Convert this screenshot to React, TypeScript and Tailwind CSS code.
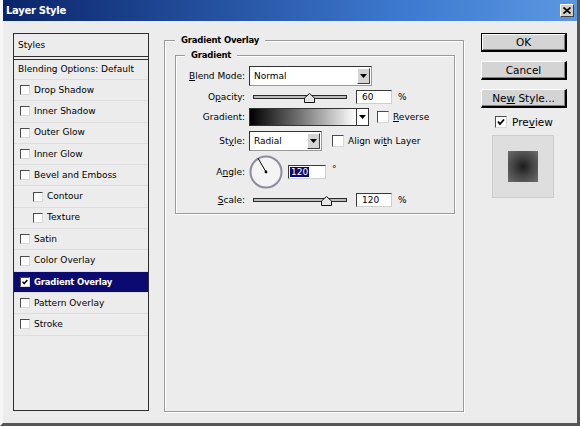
import React from "react";

type Item = { name: string; indent?: boolean; active?: boolean };

const effects: Item[] = [
  { name: "Drop Shadow" },
  { name: "Inner Shadow" },
  { name: "Outer Glow" },
  { name: "Inner Glow" },
  { name: "Bevel and Emboss" },
  { name: "Contour", indent: true },
  { name: "Texture", indent: true },
  { name: "Satin" },
  { name: "Color Overlay" },
  { name: "Gradient Overlay", active: true },
  { name: "Pattern Overlay" },
  { name: "Stroke" },
];

function CheckBox({ checked = false, big = false }: { checked?: boolean; big?: boolean }) {
  return (
    <span
      className={`${big ? "w-[12px] h-[12px]" : "w-[10px] h-[10px]"} shrink-0 flex items-center justify-center bg-white border border-t-[#4a4a4a] border-l-[#4a4a4a] border-r-[#d8d8d8] border-b-[#d8d8d8]`}
    >
      {checked && (
        <svg viewBox="0 0 10 10" className="w-full h-full">
          <polyline points="2,4.5 4,7 8,2.5" fill="none" stroke="#000" strokeWidth="1.8" />
        </svg>
      )}
    </span>
  );
}

function Arrow() {
  return (
    <svg width="7" height="4" viewBox="0 0 7 4">
      <polygon points="0,0 7,0 3.5,4" fill="#000" />
    </svg>
  );
}

function DropButton() {
  return (
    <span className="w-[13px] h-full shrink-0 flex items-center justify-center bg-[#d4d4d4] border border-t-white border-l-white border-r-[#404040] border-b-[#404040]">
      <Arrow />
    </span>
  );
}

function Slider({ pos }: { pos: number }) {
  return (
    <div className="relative ml-[4px] w-[94px] h-[14px] flex items-center">
      <div className="w-full h-[4px] bg-[#bdbdbd] border border-[#2a2a2a]" />
      <svg
        width="11"
        height="10"
        viewBox="0 0 11 10"
        className="absolute top-[3px]"
        style={{ left: pos - 5 }}
      >
        <polygon points="5.5,0.5 10.5,5 10.5,9.5 0.5,9.5 0.5,5" fill="#e6e6e6" stroke="#111" />
      </svg>
    </div>
  );
}

function Field({ children, w }: { children: React.ReactNode; w: string }) {
  return (
    <span
      className={`${w} h-[14px] flex items-center pl-[5px] bg-white border border-t-[#3a3a3a] border-l-[#3a3a3a] border-r-[#cfcfcf] border-b-[#cfcfcf]`}
    >
      {children}
    </span>
  );
}

function Row({ label, children, className }: { label: React.ReactNode; children: React.ReactNode; className: string }) {
  return (
    <div className={`flex items-center ${className}`}>
      <span className="w-[69px] text-right">{label}</span>
      <div className="ml-[4px] flex items-center h-full">{children}</div>
    </div>
  );
}

function Button({ children, primary = false }: { children: React.ReactNode; primary?: boolean }) {
  return (
    <div
      className={
        primary
          ? "h-[19px] flex items-center justify-center bg-[#d4d4d4] border border-black border-r-2 border-b-2 shadow-[inset_1px_1px_0_#fff,inset_-1px_-1px_0_#808080]"
          : "h-[19px] flex items-center justify-center bg-[#d4d4d4] border border-t-white border-l-white border-r-black border-b-black border-r-2 border-b-2 shadow-[inset_-1px_-1px_0_#808080]"
      }
    >
      {children}
    </div>
  );
}

function Dial() {
  return (
    <svg width="34" height="34" viewBox="0 0 34 34">
      <circle cx="17" cy="17" r="15.5" fill="#f4f4f4" stroke="#8c8c9c" strokeWidth="2" />
      <line x1="17" y1="17" x2="9" y2="3.2" stroke="#000" strokeWidth="1" />
      <circle cx="17" cy="17" r="1.4" fill="#000" />
    </svg>
  );
}

export default function App() {
  return (
    <div className="w-[580px] h-[426px] bg-[#ececec] font-['DejaVu_Sans',sans-serif] text-[9px] leading-none text-black border-l-[3px] border-l-[#f6f6f6] border-r-[3px] border-r-[#555] border-b-[3px] border-b-[#555] flex flex-col overflow-hidden">
      {/* title bar */}
      <div className="h-[21px] shrink-0 flex items-center justify-between pl-[3px] pr-[3px] bg-[linear-gradient(90deg,#0a246a,#3d7ad0_70%,#5c97e0)]">
        <span className="text-white font-bold text-[10px] tracking-[-0.3px]">Layer Style</span>
        <span className="w-[14px] h-[13px] flex items-center justify-center bg-[#d4d0c8] border border-t-white border-l-white border-r-[#404040] border-b-[#404040]">
          <svg width="8" height="7" viewBox="0 0 8 7">
            <path d="M0.5 0.5 L7.5 6.5 M7.5 0.5 L0.5 6.5" stroke="#000" strokeWidth="1.7" />
          </svg>
        </span>
      </div>

      <div className="flex items-start pt-[12px] pl-[10px]">
        {/* effect list */}
        <div className="w-[136px] h-[378px] border border-[#2e2e2e] flex flex-col">
          <div className="h-[23px] flex items-center pl-[4px] border-b border-[#2e2e2e]">Styles</div>
          <div className="mt-[2px] h-[21px] flex items-center pl-[4px] border-t border-b border-t-[#2e2e2e] border-b-[#dedede]">
            Blending Options: Default
          </div>
          {effects.map((e) => (
            <div
              key={e.name}
              className={`h-[21.3px] flex items-center gap-[4px] border-b border-[#dedede] ${e.indent ? "pl-[19px]" : "pl-[6px]"} ${e.active ? "bg-[#0a0a70] text-white font-bold text-[8.5px] tracking-[-0.2px]" : ""}`}
            >
              <CheckBox checked={e.active} />
              <span>{e.name}</span>
            </div>
          ))}
        </div>

        {/* settings */}
        <fieldset className="ml-[15px] mt-[1px] w-[300px] h-[378px] pt-[3px] pl-[10px] pr-[8px] border border-[#9a9a9a] shadow-[inset_1px_1px_0_#fff,1px_1px_0_#fff]">
          <legend className="ml-0 px-[6px] leading-[12px] font-bold text-[8.5px] tracking-[-0.2px] bg-[#ececec]">
            Gradient Overlay
          </legend>
          <fieldset className="w-[280px] pt-[5px] pb-[6px] border border-[#9a9a9a] shadow-[inset_1px_1px_0_#fff,1px_1px_0_#fff]">
            <legend className="ml-[9px] px-[6px] leading-[12px] font-bold text-[8.5px] tracking-[-0.2px] bg-[#ececec]">
              Gradient
            </legend>

            <Row className="h-[20px]" label={<><span className="underline">B</span>lend Mode:</>}>
              <div className="w-[123px] h-[20px] flex bg-white border border-t-[#333] border-l-[#333] border-r-[#9a9a9a] border-b-[#9a9a9a] p-[1px]">
                <span className="flex-1 flex items-center pl-[3px]">Normal</span>
                <DropButton />
              </div>
            </Row>

            <Row className="mt-[3px] h-[16px]" label={<>O<span className="underline">p</span>acity:</>}>
              <Slider pos={56} />
              <span className="ml-[9px]">
                <Field w="w-[36px]">60</Field>
              </span>
              <span className="ml-[6px]">%</span>
            </Row>

            <Row className="mt-[3px] h-[18px]" label="Gradient:">
              <div className="w-[120px] h-[18px] flex border border-[#333]">
                <span className="flex-1 bg-[linear-gradient(90deg,#000,#6e6e6e_45%,#fff)]" />
                <span className="w-[12px] flex items-center justify-center bg-white border-l border-[#333]">
                  <Arrow />
                </span>
              </div>
              <span className="ml-[8px]">
                <CheckBox big />
              </span>
              <span className="ml-[4px]">
                <span className="underline">R</span>everse
              </span>
            </Row>

            <Row className="mt-[5px] h-[20px]" label={<>St<span className="underline">y</span>le:</>}>
              <div className="w-[73px] h-[20px] flex bg-white border border-t-[#333] border-l-[#333] border-r-[#9a9a9a] border-b-[#9a9a9a] p-[1px]">
                <span className="flex-1 flex items-center pl-[3px]">Radial</span>
                <DropButton />
              </div>
              <span className="ml-[10px]">
                <CheckBox big />
              </span>
              <span className="ml-[4px]">
                Align wi<span className="underline">t</span>h Layer
              </span>
            </Row>

            <Row className="mt-[4px] h-[34px]" label={<>A<span className="underline">n</span>gle:</>}>
              <Dial />
              <span className="ml-[5px]">
                <span className="w-[38px] h-[14px] flex items-center pl-[1px] bg-white border border-t-[#3a3a3a] border-l-[#3a3a3a] border-r-[#cfcfcf] border-b-[#cfcfcf]">
                  <span className="bg-[#0a0a70] text-white px-[1px] h-[10px] flex items-center">120</span>
                </span>
              </span>
              <span className="ml-[6px] -mt-[6px]">°</span>
            </Row>

            <Row className="mt-[4px] h-[14px]" label={<><span className="underline">S</span>cale:</>}>
              <Slider pos={73} />
              <span className="ml-[9px]">
                <Field w="w-[36px]">120</Field>
              </span>
              <span className="ml-[6px]">%</span>
            </Row>
          </fieldset>
        </fieldset>

        {/* buttons and preview */}
        <div className="ml-[17px] w-[86px] flex flex-col text-[10.5px]">
          <Button primary>OK</Button>
          <div className="mt-[9px]">
            <Button>Cancel</Button>
          </div>
          <div className="mt-[9px]">
            <Button>
              Ne<span className="underline">w</span>&nbsp;Style...
            </Button>
          </div>
          <div className="mt-[8px] pl-[14px] h-[12px] flex items-center">
            <CheckBox big checked />
            <span className="ml-[5px]">
              Pre<span className="underline">v</span>iew
            </span>
          </div>
          <div className="mt-[7px] ml-[11px] w-[62px] h-[63px] flex items-center justify-center bg-[#dedede] border border-[#cdcdcd]">
            <div className="w-[30px] h-[31px] bg-[radial-gradient(circle,#1c1c1c_0%,#444_45%,#6e6e6e_100%)]" />
          </div>
        </div>
      </div>
    </div>
  );
}
